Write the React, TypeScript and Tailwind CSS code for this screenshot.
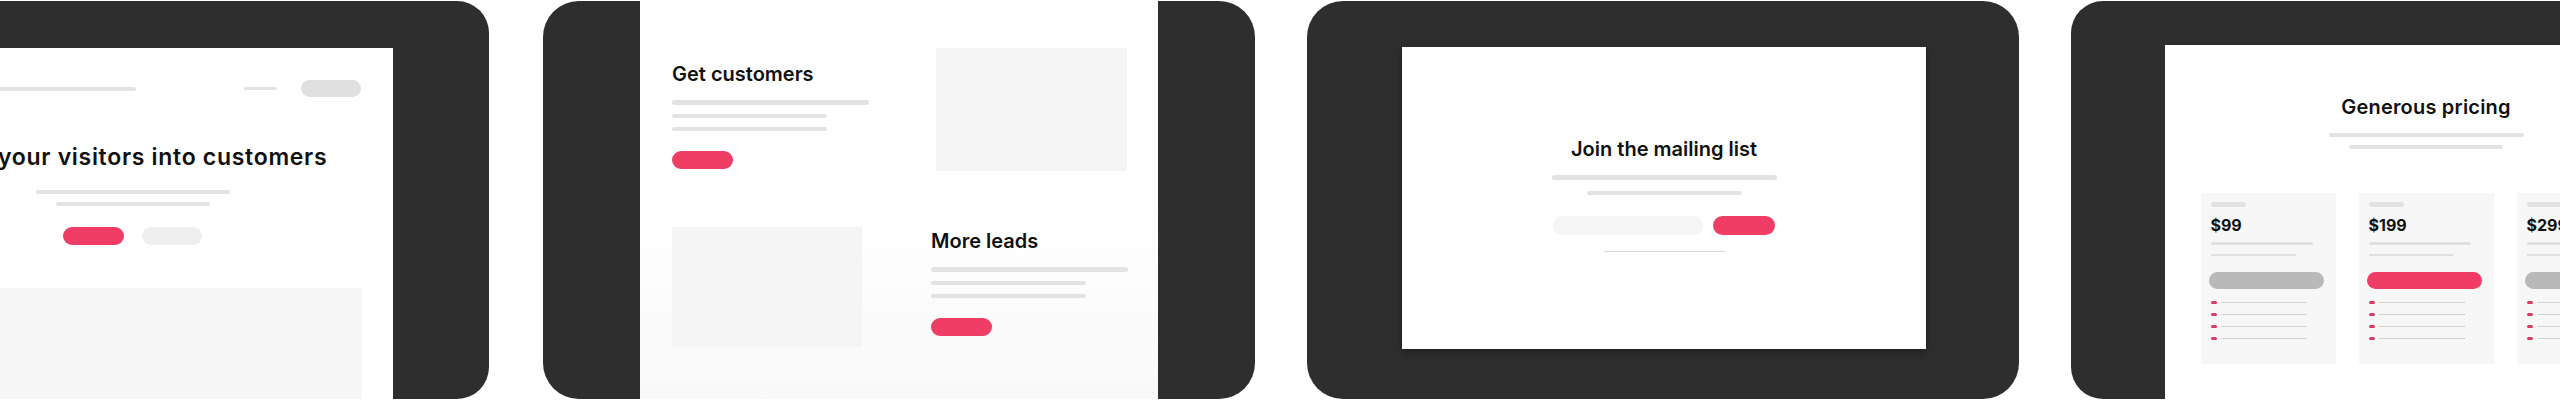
const font = { fontFamily: "Inter, 'Noto Sans', sans-serif" };

const Line = ({ w, h = "h-[4px]", c = "bg-[#e3e3e3]" }: { w: string; h?: string; c?: string }) => (
  <div className={`${w} ${h} ${c} rounded-full`} />
);

function HeroPanel() {
  return (
    <div className="shrink-0 ml-[-223px] w-[712px] h-[398px] mt-px rounded-[32px] bg-[#2e2e2e] overflow-hidden pl-[95px] pt-[47px]">
      <div className="w-[521px] h-[400px] bg-white flex flex-col">
        <div className="flex items-center justify-between pt-8 pl-[100px] pr-8">
          <Line w="w-[164px]" h="h-[4px]" />
          <div className="flex items-center gap-6">
            <Line w="w-[33px]" h="h-[3px]" />
            <div className="w-[60px] h-[17px] rounded-full bg-[#e0e0e0]" />
          </div>
        </div>
        <h1 className="mt-[47px] text-center text-[23px] leading-[26px] font-semibold text-[#111] whitespace-nowrap tracking-[0.7px]">
          Turn your visitors into customers
        </h1>
        <div className="mt-[20px] flex flex-col items-center gap-[8px]">
          <Line w="w-[194px]" h="h-[4px]" />
          <Line w="w-[154px]" h="h-[4px]" />
        </div>
        <div className="mt-[21px] flex justify-center gap-[18px]">
          <div className="w-[61px] h-[18px] rounded-full bg-[#ef3d66]" />
          <div className="w-[60px] h-[18px] rounded-full bg-[#efefef]" />
        </div>
        <div className="mt-[43px] ml-[40px] mr-[31px] flex-1 bg-[#f6f6f6]" />
      </div>
    </div>
  );
}

function FeatureText({ title }: { title: string }) {
  return (
    <div className="flex flex-col">
      <div className="text-[20px] leading-[24px] font-semibold text-[#111] whitespace-nowrap">{title}</div>
      <div className="mt-[14px] flex flex-col gap-[9px]">
        <Line w="w-[197px]" h="h-[5px]" />
        <Line w="w-[155px]" />
        <Line w="w-[155px]" />
      </div>
      <div className="mt-[20px] w-[61px] h-[18px] rounded-full bg-[#ef3d66]" />
    </div>
  );
}

function FeaturesPanel() {
  return (
    <div className="shrink-0 ml-[54px] w-[712px] h-[398px] mt-px rounded-[36px] bg-[#2e2e2e] overflow-hidden pl-[97px]">
      <div className="w-[518px] h-full bg-gradient-to-b from-white via-white to-[#f9f9f9] pl-[32px]">
        <div className="flex items-start">
          <div className="w-[264px] mt-[61px]">
            <FeatureText title="Get customers" />
          </div>
          <div className="mt-[47px] w-[191px] h-[123px] bg-[#f5f5f5]" />
        </div>
        <div className="flex items-start mt-[56px]">
          <div className="w-[190px] h-[120px] bg-[#f5f5f5]" />
          <div className="ml-[69px] mt-[2px]">
            <FeatureText title="More leads" />
          </div>
        </div>
      </div>
    </div>
  );
}

function MailingPanel() {
  return (
    <div className="shrink-0 ml-[52px] w-[712px] h-[398px] mt-px rounded-[36px] bg-[#2e2e2e] overflow-hidden pl-[95px] pt-[46px]">
      <div className="w-[524px] h-[302px] bg-white shadow-[0_3px_8px_rgba(0,0,0,0.35)] flex flex-col items-center">
        <div className="mt-[90px] text-[20px] leading-[24px] font-semibold text-[#111] whitespace-nowrap">
          Join the mailing list
        </div>
        <div className="mt-[14px] flex flex-col items-center gap-[11px]">
          <Line w="w-[225px]" h="h-[5px]" />
          <Line w="w-[155px]" />
        </div>
        <div className="mt-[21px] flex gap-[10px]">
          <div className="w-[150px] h-[19px] rounded-full bg-[#f6f6f6]" />
          <div className="w-[62px] h-[19px] rounded-full bg-[#ef3d66]" />
        </div>
        <div className="mt-[16px] w-[121px] h-px bg-[#d8d8d8]" />
      </div>
    </div>
  );
}

function PriceCard({ price, featured }: { price: string; featured?: boolean }) {
  return (
    <div className="w-[135px] h-[171px] shrink-0 bg-[#f7f7f7] pl-[10px] pt-[9px]">
      <Line w="w-[35px]" h="h-[5px]" c="bg-[#e2e2e2]" />
      <div className="mt-[9px] text-[16px] leading-[18px] font-bold text-[#111]">{price}</div>
      <div className="mt-[8px] flex flex-col gap-[9px]">
        <Line w="w-[102px]" h="h-[3px]" c="bg-[#e0e0e0]" />
        <Line w="w-[85px]" h="h-[2px]" c="bg-[#e0e0e0]" />
      </div>
      <div
        className={`mt-[16px] -ml-[2px] w-[115px] h-[17px] rounded-full ${featured ? "bg-[#ef3d66]" : "bg-[#b9b9b9]"}`}
      />
      <div className="mt-[12px] flex flex-col gap-[9px]">
        {[0, 1, 2, 3].map((i) => (
          <div key={i} className="flex items-center gap-[4px]">
            <div className="w-[6px] h-[3px] rounded-full bg-[#dc3a64]" />
            <div className="w-[86px] h-px bg-[#d2d2d2]" />
          </div>
        ))}
      </div>
    </div>
  );
}

function PricingPanel() {
  return (
    <div className="shrink-0 ml-[52px] w-[712px] h-[398px] mt-px rounded-[32px] bg-[#2e2e2e] overflow-hidden pl-[94px] pt-[44px]">
      <div className="w-[522px] h-[400px] bg-white flex flex-col items-center">
        <h2 className="mt-[50px] text-[20px] leading-[24px] font-semibold text-[#111] whitespace-nowrap tracking-[0.2px]">
          Generous pricing
        </h2>
        <div className="mt-[14px] flex flex-col items-center gap-[8px]">
          <Line w="w-[195px]" />
          <Line w="w-[154px]" />
        </div>
        <div className="mt-[44px] flex gap-[23px]">
          <PriceCard price="$99" />
          <PriceCard price="$199" featured />
          <PriceCard price="$299" />
        </div>
      </div>
    </div>
  );
}

export default function App() {
  return (
    <div className="w-[2560px] h-[400px] bg-white overflow-hidden flex" style={font}>
      <HeroPanel />
      <FeaturesPanel />
      <MailingPanel />
      <PricingPanel />
    </div>
  );
}
